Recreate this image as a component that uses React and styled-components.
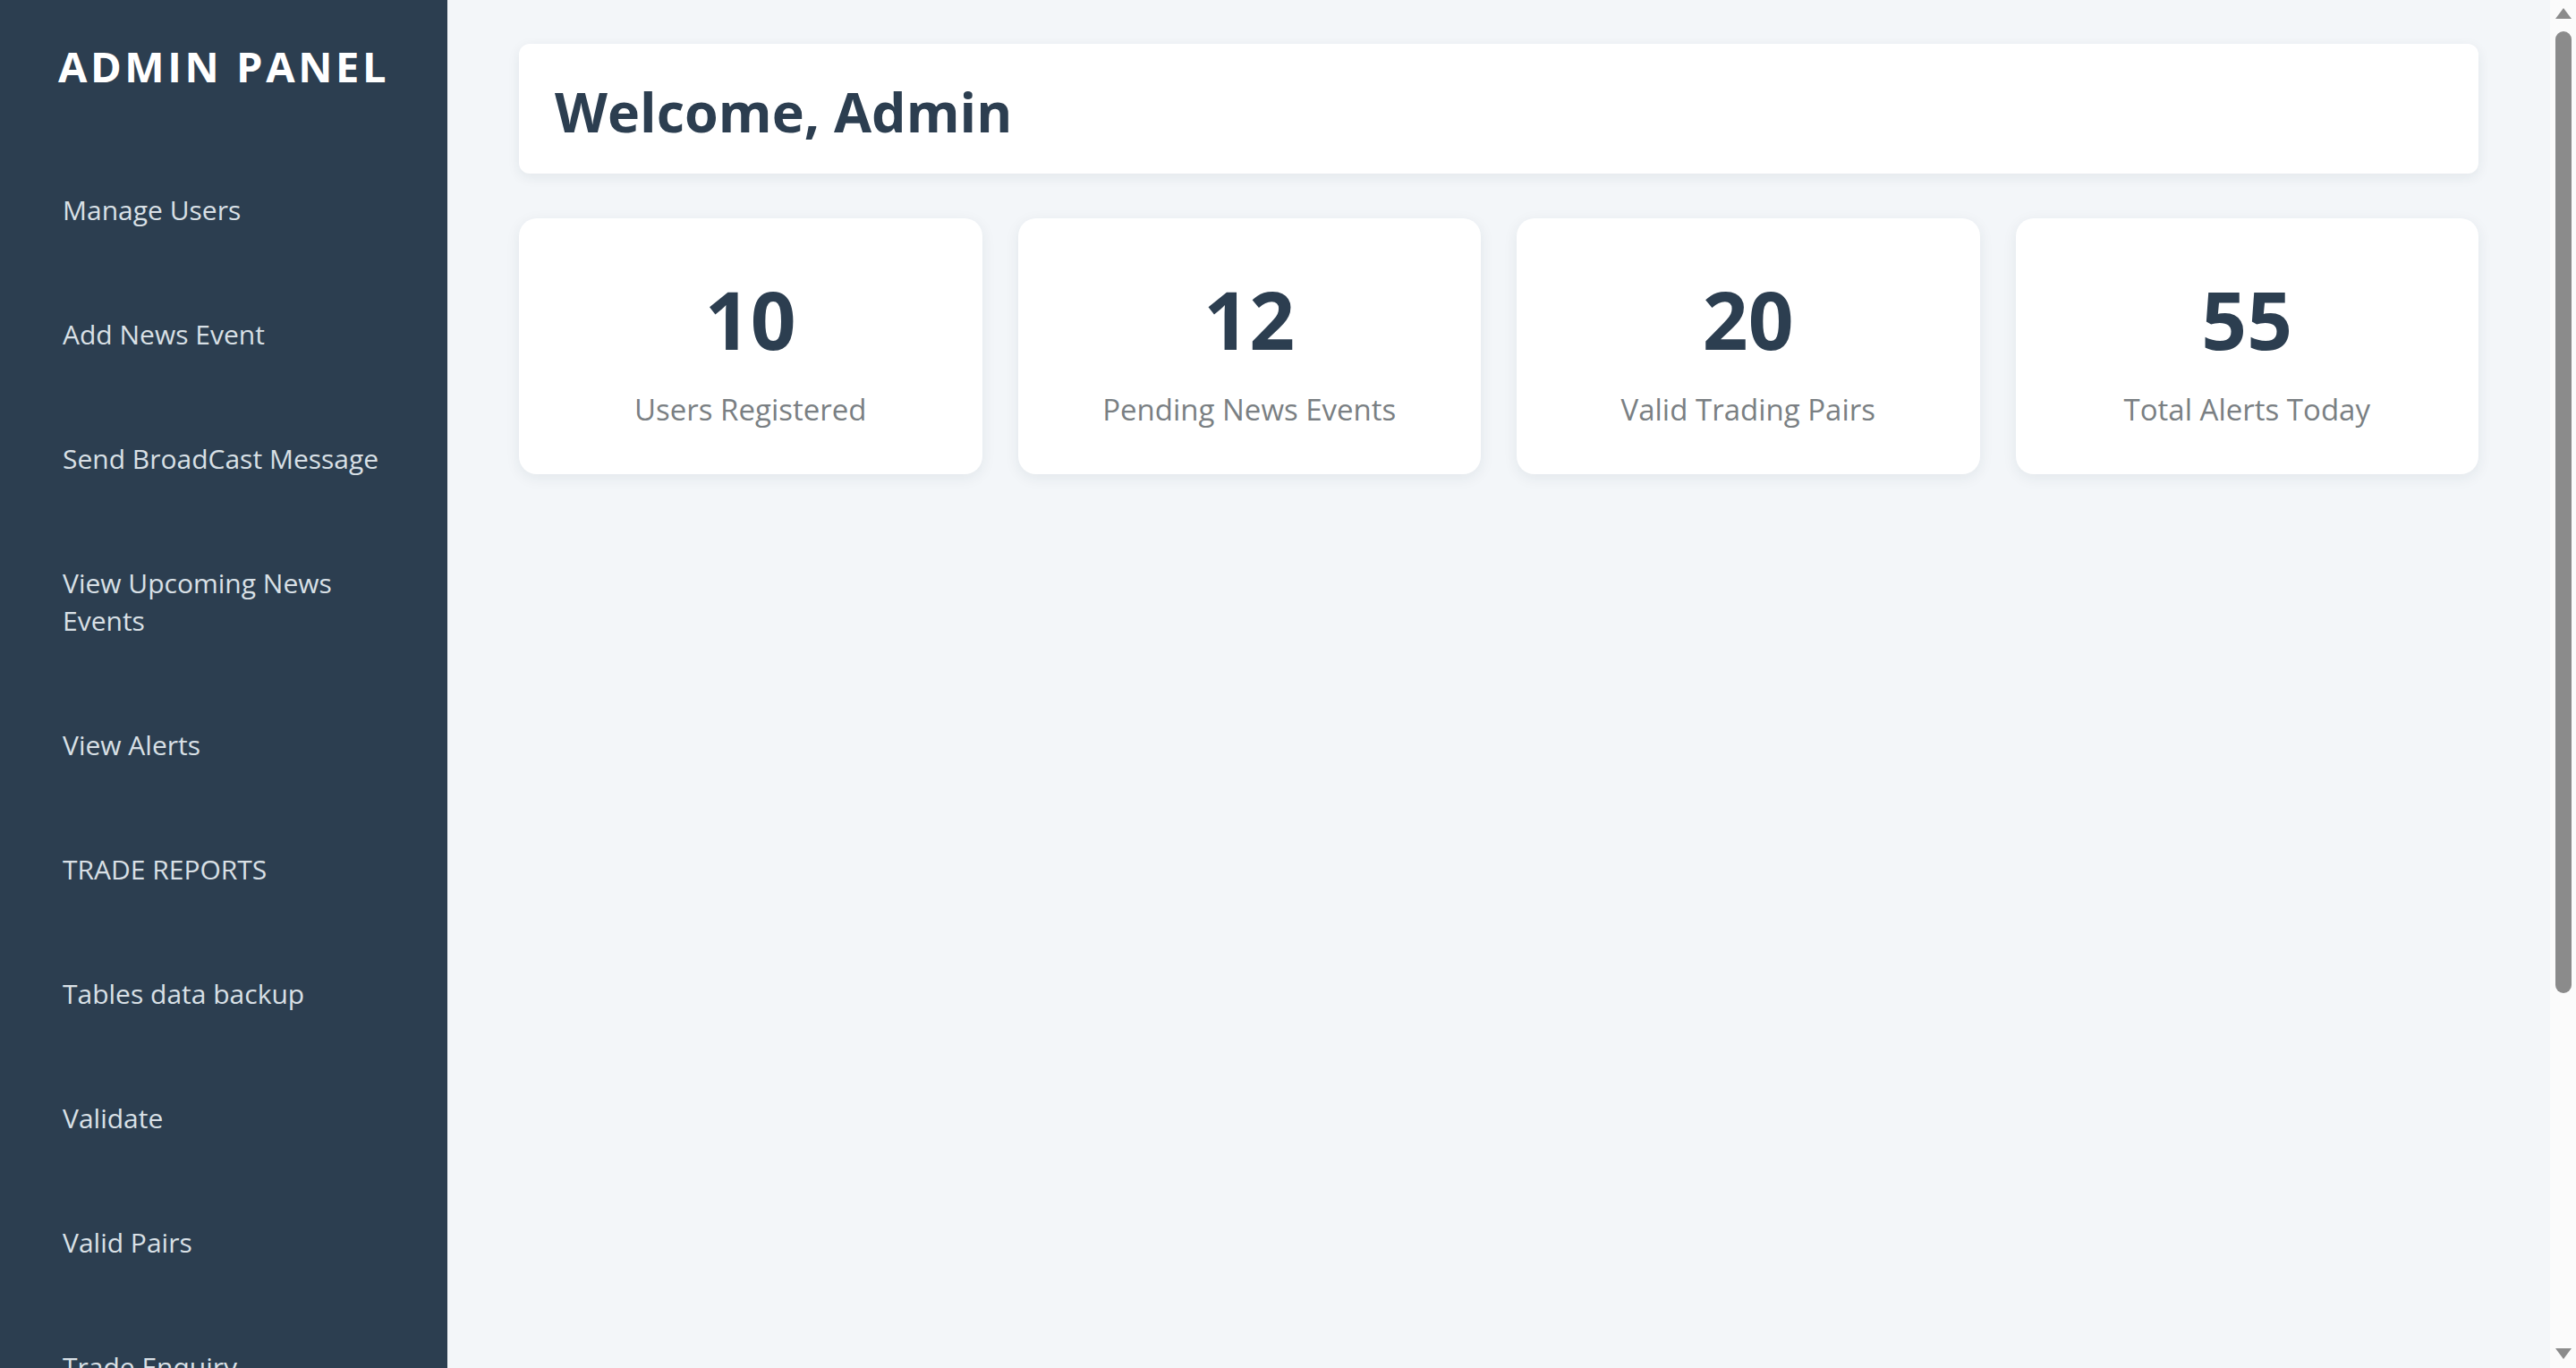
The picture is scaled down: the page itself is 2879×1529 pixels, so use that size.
import React from 'react';
import styled, { createGlobalStyle } from 'styled-components';

const GlobalStyle = createGlobalStyle`
  body {
    margin: 0;
    font-family: "Open Sans", "Noto Sans", "Liberation Sans", sans-serif;
    background: #f3f6f9;
  }
  * {
    box-sizing: border-box;
  }
`;

const Layout = styled.div`
  display: flex;
  min-height: 100vh;
`;

const Sidebar = styled.aside`
  flex: 0 0 500px;
  width: 500px;
  background: #2c3e50;
  padding: 42px 40px 97px;
`;

const Brand = styled.h2`
  margin: 0 0 60px;
  text-align: center;
  color: #ffffff;
  font-size: 47px;
  line-height: 64px;
  font-weight: 700;
  letter-spacing: 3.6px;
`;

const Nav = styled.nav`
  display: flex;
  flex-direction: column;
`;

const NavLink = styled.a`
  display: block;
  padding: 48px 0 49px 30px;
  color: #d9e0e6;
  font-size: 30px;
  line-height: 42px;
  text-decoration: none;
  cursor: pointer;
`;

const Main = styled.main`
  flex: 1;
  padding: 49px 109px 40px 80px;
`;

const WelcomeCard = styled.header`
  display: flex;
  align-items: center;
  height: 145px;
  padding: 6px 40px 0;
  background: #ffffff;
  border-radius: 12px;
  box-shadow: 0 4px 14px rgba(30, 45, 60, 0.08);
`;

const Title = styled.h1`
  margin: 0;
  color: #2c3e50;
  font-size: 61px;
  font-weight: 700;
  line-height: 1.2;
`;

const Stats = styled.section`
  display: grid;
  grid-template-columns: repeat(4, 1fr);
  gap: 40px;
  margin-top: 50px;
`;

const StatCard = styled.div`
  display: flex;
  flex-direction: column;
  align-items: center;
  padding: 67px 20px 50px;
  background: #ffffff;
  border-radius: 20px;
  box-shadow: 0 4px 16px rgba(30, 45, 60, 0.08);
`;

const StatValue = styled.div`
  color: #2c3e50;
  font-size: 89px;
  font-weight: 700;
  line-height: 91px;
  margin-bottom: 34px;
`;

const StatLabel = styled.div`
  color: #7a7f83;
  font-size: 33px;
  line-height: 44px;
`;

/* window scrollbar as it appears in the capture */
const ScrollRail = styled.div`
  position: fixed;
  top: 0;
  right: 0;
  width: 29px;
  height: 100vh;
  display: flex;
  flex-direction: column;
  align-items: center;
  padding: 9px 0 10px 1px;
  background: #fbfbfb;
`;

const Arrow = styled.div`
  width: 0;
  height: 0;
  border-left: 9px solid transparent;
  border-right: 9px solid transparent;
  ${({ $down }) =>
    $down ? 'border-top: 12px solid #8b8b8b;' : 'border-bottom: 12px solid #8b8b8b;'}
`;

const Thumb = styled.div`
  width: 18px;
  height: 1075px;
  margin-top: 14px;
  border-radius: 9px;
  background: #8b8b8b;
`;

const RailSpacer = styled.div`
  flex: 1;
`;

const menu = [
  'Manage Users',
  'Add News Event',
  'Send BroadCast Message',
  'View Upcoming News Events',
  'View Alerts',
  'TRADE REPORTS',
  'Tables data backup',
  'Validate',
  'Valid Pairs',
  'Trade Enquiry',
  'Manage Subscriptions',
  'Settings',
  'Logout',
];

const stats = [
  { value: 10, label: 'Users Registered' },
  { value: 12, label: 'Pending News Events' },
  { value: 20, label: 'Valid Trading Pairs' },
  { value: 55, label: 'Total Alerts Today' },
];

export default function App() {
  return (
    <>
      <GlobalStyle />
      <Layout>
        <Sidebar>
          <Brand>ADMIN PANEL</Brand>
          <Nav>
            {menu.map((item) => (
              <NavLink key={item}>{item}</NavLink>
            ))}
          </Nav>
        </Sidebar>

        <Main>
          <WelcomeCard>
            <Title>Welcome, Admin</Title>
          </WelcomeCard>

          <Stats>
            {stats.map((stat) => (
              <StatCard key={stat.label}>
                <StatValue>{stat.value}</StatValue>
                <StatLabel>{stat.label}</StatLabel>
              </StatCard>
            ))}
          </Stats>
        </Main>
      </Layout>

      <ScrollRail>
        <Arrow />
        <Thumb />
        <RailSpacer />
        <Arrow $down />
      </ScrollRail>
    </>
  );
}
